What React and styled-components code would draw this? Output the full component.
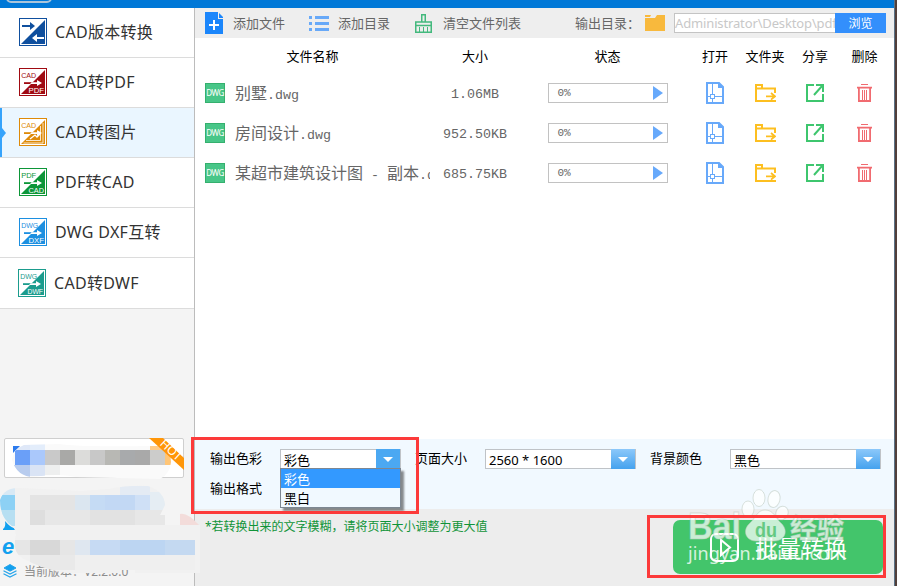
import React from "react";
import styled, { createGlobalStyle } from "styled-components";

const Global = createGlobalStyle`
  * { box-sizing: border-box; }
  html, body { margin: 0; padding: 0; overflow: hidden; }
  body { font-family: "Noto Sans", "Noto Sans CJK SC", sans-serif; font-size: 13px; color: #000; }
  svg { display: block; flex: none; }
`;

const Desktop = styled.div`
  width: 897px;
  height: 586px;
  display: grid;
  grid-template-columns: 894px 1px 2px;
  background: #513f3b;
  overflow: hidden;
`;
const Window = styled.div`
  position: relative;
  display: grid;
  grid-template-rows: 8px 578px;
  background: #fff;
`;
const WindowEdge = styled.div`
  background: #5a7185;
`;
const TitleBar = styled.div`
  background: #0078d7;
  overflow: hidden;
`;
const TitleTab = styled.div`
  width: 46px;
  height: 20px;
  margin: -17px 0 0 6px;
  border: 2px solid #a9c4da;
  border-radius: 5px;
`;
const Body = styled.div`
  display: grid;
  grid-template-columns: 195px 699px;
  min-height: 0;
`;

const Sidebar = styled.nav`
  background: #f4f4f4;
  border-right: 1px solid #bcbcbc;
`;
const NavItem = styled.div`
  display: flex;
  align-items: center;
  gap: 8px;
  height: ${(p) => (p.$last ? 51 : 50)}px;
  padding-left: ${(p) => (p.$last ? 18 : 19)}px;
  padding-bottom: ${(p) => (p.$last ? 0 : 1)}px;
  border-bottom: 1px solid #dcdcdc;
  box-shadow: ${(p) => (p.$active ? "inset 2px 0 0 #36a3fb" : "none")};
  background: ${(p) => (p.$active ? "#eaf6ff" : "#fff")};
  position: relative;
`;
const NavLabel = styled.span`
  font-size: 16px;
  line-height: 24px;
  letter-spacing: 0.3px;
  color: #333;
  white-space: pre;
`;
const ActiveMark = styled.svg`
  position: absolute;
  left: 0;
  top: 20px;
`;
const Promo = styled.div`
  position: absolute;
  left: 4px;
  top: 438px;
  width: 180px;
  height: 40px;
  background: #fff;
  border: 1px solid #cfcfcf;
  border-radius: 2px;
`;
const Smudge = styled.svg`
  position: absolute;
  left: 0;
  top: 430px;
`;
const Version = styled.div`
  position: absolute;
  left: 3px;
  top: 562px;
  display: flex;
  align-items: center;
  gap: 7px;
  height: 18px;
  font-size: 12px;
  color: #8d8d8d;
  white-space: nowrap;
`;

const Main = styled.main`
  display: grid;
  grid-template-rows: 30px 35px 366px 70px 77px;
  min-width: 0;
`;
const Toolbar = styled.div`
  display: flex;
  align-items: center;
  background: #eee;
  padding-left: 10px;
  color: #666;
`;
const Tool = styled.div`
  display: flex;
  align-items: center;
  gap: ${(p) => p.$gap}px;
  width: ${(p) => p.$w}px;
  line-height: 20px;
  white-space: nowrap;
`;
const PathField = styled.div`
  width: 161px;
  height: 20px;
  border: 1px solid #c4c4c4;
  border-right: 0;
  background: #fff;
  color: #c8c8c8;
  font-size: 13px;
  line-height: 18px;
  letter-spacing: -0.14px;
  overflow: hidden;
  white-space: nowrap;
`;
const Browse = styled.button`
  width: 51px;
  height: 20px;
  border: 0;
  padding: 0;
  background: #338ffc;
  color: #fff;
  font: 12px/20px "Noto Sans CJK SC", sans-serif;
`;

const columns = "235px 90px 175px 40px 60px 40px 59px";
const HeadRow = styled.div`
  display: grid;
  grid-template-columns: ${columns};
  height: 35px;
`;
const HeadCell = styled.div`
  margin: 0 1px;
  border-bottom: 1px solid #ebebeb;
  line-height: 36px;
  text-align: center;
`;
const Files = styled.div`
  background: #fff;
`;
const FileRow = styled.div`
  display: grid;
  grid-template-columns: ${columns};
  height: 40px;
`;
const Cell = styled.div`
  display: flex;
  align-items: center;
  justify-content: center;
  min-width: 0;
  overflow: hidden;
`;
const NameCell = styled(Cell)`
  justify-content: flex-start;
  gap: 10px;
  padding-left: 10px;
`;
const Badge = styled.span`
  flex: none;
  width: 20px;
  height: 20px;
  border: 1px solid #35b06e;
  background: #48c688;
  color: #fff;
  font: 8px/18px "Noto Sans", sans-serif;
  letter-spacing: -0.5px;
  text-align: center;
`;
const FileName = styled.span`
  font: 16px/24px "Noto Sans CJK SC", sans-serif;
  color: #666;
  white-space: pre;
  padding-top: 2px;
`;
const Mono = styled.span`
  font-family: "Liberation Mono", monospace;
  font-size: ${(p) => p.$size || 13.33}px;
  color: #666;
  white-space: pre;
`;
const Size = styled(Mono)`
  padding-top: 2px;
`;
const Progress = styled.div`
  display: flex;
  align-items: center;
  justify-content: space-between;
  width: 120px;
  height: 20px;
  border: 1px solid #c2c2c2;
  padding: 0 4px 0 9px;
  margin-left: 0;
`;

const Settings = styled.section`
  display: grid;
  grid-template-columns: 70px 135px 70px 165px 80px 151px;
  grid-template-rows: 30px 30px;
  align-items: center;
  padding: 5px 0 0 15px;
  background: #f1f9ff;
`;
const Label = styled.span`
  line-height: 20px;
  padding-bottom: 2px;
`;
const Select = styled.div`
  position: relative;
  display: flex;
  justify-content: space-between;
  width: ${(p) => p.$w}px;
  height: 20px;
  border: 1px solid #bfc3c7;
  background: #fff;
  padding-left: 3px;
  line-height: 20px;
`;
const DropButton = styled.span`
  display: flex;
  align-items: center;
  justify-content: center;
  width: 24px;
  height: 20px;
  margin: -1px 0 0 0;
  background: ${(p) => (p.$open ? "#4ba8f2" : "linear-gradient(#8cc8fa, #45a2ee)")};
`;
const Options = styled.div`
  position: absolute;
  left: -1px;
  top: 18px;
  width: 121px;
  height: 40px;
  border: 1px solid #7d8792;
  background: #f1f9ff;
  box-shadow: 3px 3px 2px rgba(0, 0, 0, 0.45);
`;
const Option = styled.div`
  height: 19px;
  line-height: 20px;
  padding-left: 3px;
  background: ${(p) => (p.$on ? "#3399ff" : "transparent")};
  color: ${(p) => (p.$on ? "#fff" : "#000")};
`;

const Footer = styled.footer`
  display: flex;
  justify-content: space-between;
  align-items: flex-start;
  padding: 11px 11px 0 10px;
  background: #ededed;
`;
const Hint = styled.p`
  margin: -2px 0 0;
  font-size: 12px;
  line-height: 18px;
  color: #109438;
`;
const Convert = styled.button`
  display: flex;
  align-items: center;
  gap: 16px;
  width: 210px;
  height: 54px;
  padding: 0 0 0 37px;
  border: 0;
  border-radius: 7px;
  background: #43c56b;
  color: #fff;
  font: 23px/30px "Noto Sans CJK SC", sans-serif;
`;
const Highlight = styled.div`
  position: absolute;
  left: ${(p) => p.$x}px;
  top: ${(p) => p.$y}px;
  width: ${(p) => p.$w}px;
  height: ${(p) => p.$h}px;
  border: 3px solid #fc3a3a;
  pointer-events: none;
`;
const Watermark = styled.svg`
  position: absolute;
  left: 680px;
  top: 484px;
`;

function FormatIcon({ color, top, bottom, kind }) {
  return (
    <svg width="28" height="28" viewBox="0 0 28 28">
      <rect x=".5" y=".5" width="27" height="27" fill="#fff" stroke={color} />
      <path d="M2 26 26 2V26Z" fill={color} />
      {kind === "swap" ? (
        <>
          <path d="M3 7h8V4l5 4-5 4V9H3Z" fill={color} />
          <path d="M25 19h-7v-3l-5 4 5 4v-3h7Z" fill="#fff" />
        </>
      ) : (
        <>
          <path d="M5 14.2h9V16H5Z" fill={color} />
          <path d="M12.5 14.2H18V12l5 3-5 3v-2h-7Z" fill="#fff" />
        </>
      )}
      {kind === "image" && (
        <>
          <path d="M21.5 8V22.5H7M24 5V25H4.5" fill="none" stroke="#fff" strokeWidth=".8" />
          <path d="m11 21 5-4 2 2 3-3" fill="none" stroke="#fff" strokeWidth="1.3" />
        </>
      )}
      {top && (
        <text x="2.2" y="10" fontSize="8" textLength={top === "DWG" ? 17 : 15} lengthAdjust="spacingAndGlyphs" fontFamily="Liberation Sans" fill={color}>{top}</text>
      )}
      {bottom && (
        <text x="9.5" y="25" fontSize="8" textLength="15.5" lengthAdjust="spacingAndGlyphs" fontFamily="Liberation Sans" fill="#fff">{bottom}</text>
      )}
    </svg>
  );
}

const AddFileIcon = () => (
  <svg width="18" height="22" viewBox="0 0 18 22">
    <path d="M0 0h13v7h5v15H0Z" fill="#1b86fb" />
    <path d="M14 1l4 4v1h-4Z" fill="#1b86fb" />
    <path d="M9 8v10M4 13h10" stroke="#fff" strokeWidth="2" />
  </svg>
);
const ListIcon = () => (
  <svg width="20" height="15" viewBox="0 0 20 15">
    <path d="M0 1.5h3M6 1.5h14M0 7.5h3M6 7.5h14M0 13.5h3M6 13.5h14" stroke="#68a9f8" strokeWidth="3" />
  </svg>
);
const BroomIcon = () => (
  <svg width="17" height="19" viewBox="0 0 17 19" fill="none" stroke="#43b97d">
    <path d="M6.75 8V.75h3.5V8M.75 11.5V8h15.5v3.5M.75 11.5h15.5v6.75H.75Z" strokeWidth="1.5" />
    <path d="M4.5 13v5M8.5 13v5M12.5 13v5" />
  </svg>
);
const FolderIcon = () => (
  <svg width="20" height="16" viewBox="0 0 20 16" fill="#f8b93d">
    <path d="M0 0h6l-1 2H0ZM0 3h10l2-3h8v16H0Z" />
  </svg>
);
const OpenIcon = () => (
  <svg width="18" height="22" viewBox="0 0 18 22" fill="none" stroke="#68a9fa">
    <path d="M1 1h12l4 4v16H1Z" strokeWidth="2" />
    <path d="M12 0l6 6h-6Z" fill="#68a9fa" stroke="none" />
    <path d="M6.5 2v10M6.5 17v4M2 14.5h2M9 14.5h8" />
    <rect x="4.5" y="12.5" width="4" height="4" />
  </svg>
);
const FolderGoIcon = () => (
  <svg width="21" height="18" viewBox="0 0 21 18" fill="none" stroke="#fdbf20">
    <path d="M20 9V4.5H1M20 16v1H1V1h6v3" strokeWidth="2" />
    <path d="M11 12.3h8M16 9l4 3.3-4 3.3" strokeWidth="1.8" />
  </svg>
);
const ShareIcon = () => (
  <svg width="18" height="18" viewBox="0 0 18 18" fill="none" stroke="#3ec66e" strokeWidth="2">
    <path d="M8 1H1v16h16v-7M10 1h7v7M16.5 1.5 8 11" />
  </svg>
);
const TrashIcon = () => (
  <svg width="15" height="18" viewBox="0 0 15 18" fill="none" stroke="#f16b70">
    <path d="M4 .5h7M5.5 6v10M7.5 6v10M9.5 6v10" />
    <path d="M0 3.7h15M1.9 4v13h11.2V4" strokeWidth="1.8" />
  </svg>
);
const PlayIcon = () => (
  <svg width="10" height="14" viewBox="0 0 10 14"><path d="M0 0v14l10-7Z" fill="#67a9fb" /></svg>
);
const Caret = () => (
  <svg width="10" height="5" viewBox="0 0 10 5"><path d="M0 0h10L5 5Z" fill="#fff" /></svg>
);
const StackIcon = () => (
  <svg width="14" height="14" viewBox="0 0 14 14" fill="none" stroke="#25a4ea">
    <path d="M7 .5 13 4 7 7.2 1 4Z" fill="#12a0ef" />
    <path d="M.5 6.8 7 10l6.5-3.2M.5 9.8 7 13l6.5-3.2" strokeWidth="1.2" />
  </svg>
);

const nav = [
  { label: "CAD版本转换", color: "#0f4f9e", kind: "swap" },
  { label: "CAD转PDF", color: "#a00a12", top: "CAD", bottom: "PDF" },
  { label: "CAD转图片", color: "#de8a08", top: "CAD", kind: "image", active: true },
  { label: "PDF转CAD", color: "#0c9638", top: "PDF", bottom: "CAD" },
  { label: "DWG DXF互转", color: "#1c8fe0", top: "DWG", bottom: "DXF" },
  { label: "CAD转DWF", color: "#1b9c8d", top: "DWG", bottom: "DWF", last: true },
];
const files = [
  { name: "别墅", ext: ".dwg", size: "1.06MB" },
  { name: "房间设计", ext: ".dwg", size: "952.50KB" },
  { name: "某超市建筑设计图", mid: " - ", tail: "副本", ext: ".dwg", size: "685.75KB" },
];

/* Mosaic tiles: x, y, width, height, colour */
const promoTiles = [
  [15, 14, 15, 6, "#dfe8f8"], [30, 14, 15, 6, "#e3edfb"], [150, 16, 20, 5, "#ffcb88"],
  [15, 20, 15, 15, "#6a9ff8"], [30, 20, 15, 15, "#aac8fb"], [45, 20, 15, 15, "#c9c9c9"],
  [60, 20, 15, 15, "#a9a9a7"], [75, 20, 15, 15, "#dcdcda"], [90, 20, 15, 15, "#c8c8c8"],
  [105, 20, 15, 15, "#b8b8b4"], [120, 20, 15, 15, "#a8aaac"], [135, 20, 15, 15, "#a9a9a9"],
  [150, 20, 15, 15, "#cccccb"], [165, 20, 6, 15, "#ffc576"],
  [12, 35, 18, 12, "#b8ccee"], [30, 35, 15, 11, "#dae4f5"], [45, 35, 15, 10, "#eeefef"],
];
const infoTiles = [
  [0, 58, 15, 7, "#d8e9f5"], [0, 65, 15, 15, "#8dd1f5"], [0, 80, 15, 16, "#b7dff2"],
  [30, 65, 45, 15, "#e4e4e4"], [75, 65, 15, 15, "#dbe6f0"], [90, 65, 15, 15, "#c5dbf4"],
  [105, 65, 45, 15, "#c2d8f4"], [135, 65, 15, 15, "#cfe0f6"], [150, 62, 15, 18, "#e5edf3"],
  [120, 56, 30, 9, "#e4ebf4"], [30, 80, 135, 15, "#e7e7e7"], [30, 80, 15, 15, "#dedede"],
  [90, 80, 45, 15, "#e2e2e2"], [15, 95, 180, 15, "#f1f1f1"],
  [15, 110, 60, 15, "#e6e6e6"], [30, 110, 30, 15, "#d8d8d8"], [75, 110, 15, 15, "#dfe7f0"],
  [90, 110, 30, 15, "#c6daf3"], [120, 110, 45, 15, "#bcd5f2"], [165, 110, 30, 15, "#c4d9f1"],
  [30, 125, 45, 15, "#e9e9e9"], [75, 125, 120, 15, "#efefef"],
];
const tile = ([x, y, w, h, c], i) => <rect key={i} x={x} y={y} width={w} height={h} fill={c} />;

export default function App() {
  return (
    <>
      <Global />
      <Desktop>
        <Window>
          <TitleBar><TitleTab /></TitleBar>
          <Body>
            <Sidebar>
              {nav.map((n) => (
                <NavItem key={n.label} $active={n.active} $last={n.last}>
                  {n.active && (
                    <ActiveMark width="6" height="10" viewBox="0 0 6 10"><path d="M1 0h1l4 5-4 5H1Z" fill="#36a3fb" /></ActiveMark>
                  )}
                  <FormatIcon {...n} />
                  <NavLabel>{n.label}</NavLabel>
                </NavItem>
              ))}
            </Sidebar>
            <Main>
              <Toolbar>
                <Tool $gap={10} $w={104}><AddFileIcon />添加文件</Tool>
                <Tool $gap={9} $w={106}><ListIcon />添加目录</Tool>
                <Tool $gap={11} $w={160}><BroomIcon />清空文件列表</Tool>
                <Tool $gap={5} $w={99}>输出目录：<FolderIcon /></Tool>
                <PathField>Administrator\Desktop\pdf</PathField>
                <Browse>浏览</Browse>
              </Toolbar>
              <HeadRow>
                {["文件名称", "大小", "状态", "打开", "文件夹", "分享", "删除"].map((h) => (
                  <HeadCell key={h}>{h}</HeadCell>
                ))}
              </HeadRow>
              <Files>
                {files.map((f) => (
                  <FileRow key={f.name}>
                    <NameCell>
                      <Badge>DWG</Badge>
                      <FileName>{f.name}{f.mid && <Mono>{f.mid}</Mono>}{f.tail}<Mono>{f.ext}</Mono></FileName>
                    </NameCell>
                    <Cell><Size>{f.size}</Size></Cell>
                    <Cell><Progress><Mono $size={11}>0%</Mono><PlayIcon /></Progress></Cell>
                    <Cell><OpenIcon /></Cell>
                    <Cell><FolderGoIcon /></Cell>
                    <Cell><ShareIcon /></Cell>
                    <Cell><TrashIcon /></Cell>
                  </FileRow>
                ))}
              </Files>
              <Settings>
                <Label>输出色彩</Label>
                <Select $w={121}>
                  彩色<DropButton $open><Caret /></DropButton>
                  <Options><Option $on>彩色</Option><Option>黑白</Option></Options>
                </Select>
                <Label>页面大小</Label>
                <Select $w={151}>2560 * 1600<DropButton><Caret /></DropButton></Select>
                <Label>背景颜色</Label>
                <Select $w={151}>黑色<DropButton><Caret /></DropButton></Select>
                <Label>输出格式</Label>
              </Settings>
              <Footer>
                <Hint>*若转换出来的文字模糊，请将页面大小调整为更大值</Hint>
                <Convert>
                  <svg width="29" height="29" viewBox="0 0 29 29" fill="none" stroke="#fff" strokeWidth="2">
                    <rect x="1" y="1" width="27" height="27" rx="5" />
                    <path d="M11 7v15l9-7.5Z" />
                  </svg>
                  批量转换
                </Convert>
              </Footer>
            </Main>
          </Body>
          <Promo />
          <Version><StackIcon />当前版本：V2.2.0.0</Version>
          <Smudge width="200" height="156" viewBox="0 0 200 156">
            <defs>
              <clipPath id="promo"><path d="M12 30Q13 19 24 15L60 14Q75 17 150 16H165Q171 22 171 32Q170 44 160 49L76 47Q66 45 58 45Q45 45 34 47Q17 47 12 30Z" /></clipPath>
              <clipPath id="info"><path d="M0 70Q4 58 18 58Q45 59 80 61L108 59Q130 55 148 56Q164 61 165 75L160 85H165V95H200V143H135V140H120V143H66Q42 139 22 128Q13 122 15 109Q18 102 12 96Q0 88 0 70Z" /></clipPath>
            </defs>
            <path d="M13 16h7l-7 7Z" fill="#2c7bed" />
            <g clipPath="url(#promo)"><rect width="200" height="60" fill="#fafafa" />{promoTiles.map(tile)}</g>
            <path d="M149 8h14l21 20v12Z" fill="#ff9608" />
            <text x="0" y="4" transform="translate(171 20) rotate(43)" textAnchor="middle" fontSize="12" fontFamily="Noto Sans" fill="#fff">HOT</text>
            <path d="M3 99q3-2 2-8 5 6 9 7l3 2H3Z" fill="#12a0ef" />
            <text x="2" y="124" fontFamily="Liberation Sans" fontWeight="bold" fontStyle="italic" fontSize="22" fill="#12a0ef">e</text>
            <g clipPath="url(#info)"><rect y="50" width="200" height="100" fill="#f1f1f1" />{infoTiles.map(tile)}</g>
            <path d="M180 84q7-2 19 11h-19Z" fill="#f3dcda" />
          </Smudge>
          <Watermark width="180" height="90" viewBox="0 0 180 90">
            <g fill="#fff" fillOpacity=".72" stroke="#b8c5ba" strokeOpacity=".5" strokeWidth="1">
              <ellipse cx="68" cy="25" rx="6" ry="8" />
              <ellipse cx="79" cy="14" rx="6" ry="8.5" />
              <ellipse cx="94" cy="15" rx="6" ry="8.5" transform="rotate(12 94 15)" />
              <ellipse cx="102" cy="29" rx="6" ry="7" transform="rotate(25 102 29)" />
              <path d="M85 26c-8 0-9 8-16 14-7 7-3 17 7 17h18c10 0 15-9 8-17-7-6-8-14-17-14Z" />
              <text x="8" y="55" fontSize="36" fontFamily="Liberation Sans" fontWeight="bold" textLength="53" lengthAdjust="spacingAndGlyphs">Bai</text>
              <text x="110" y="54" fontSize="27" fontFamily="Noto Sans CJK SC" fontWeight="bold">经验</text>
            </g>
            <text x="75" y="53" fontSize="21" fontFamily="Liberation Sans" fontWeight="bold" textLength="22" lengthAdjust="spacingAndGlyphs" fill="#65c982">du</text>
            <text x="8" y="76" fontSize="18" fontFamily="Noto Sans" textLength="158" fill="#fff" fillOpacity=".8">jingyan.baidu.com</text>
          </Watermark>
          <Highlight $x={191} $y={437} $w={228} $h={77} />
          <Highlight $x={647} $y={515} $w={239} $h={63} />
        </Window>
        <WindowEdge />
      </Desktop>
    </>
  );
}
